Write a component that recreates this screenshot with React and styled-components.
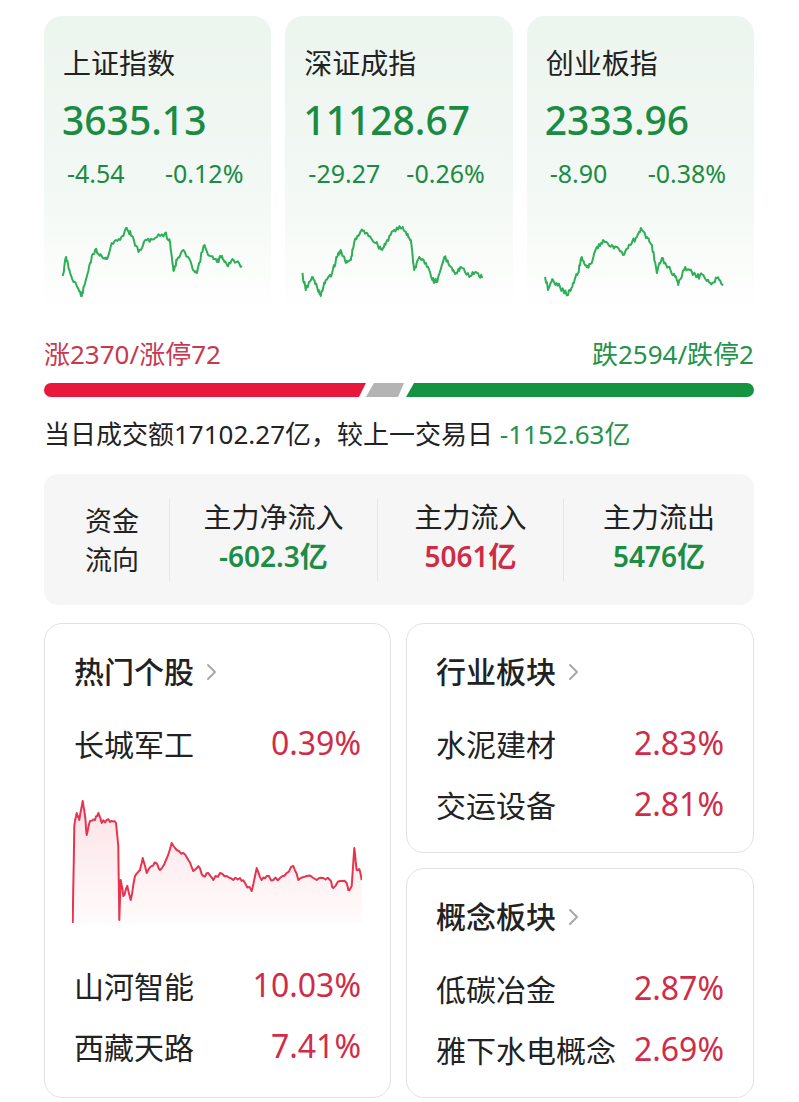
import React from "react"
import styled, { createGlobalStyle } from "styled-components"

const RED = "#d02c48"
const GREEN = "#1b8b43"
const FONT = `"Noto Sans", "Noto Sans CJK SC", sans-serif`

const GlobalStyle = createGlobalStyle`
  body {
    margin: 0;
    background: #ffffff;
    font-family: ${FONT};
    color: #222222;
  }
`

// little seeded random so the charts look the same every time
function makeRand(seed) {
  let s = seed
  return () => {
    s = (s * 9301 + 49297) % 233280
    return s / 233280
  }
}

function wiggle(points, seed, amp, steps) {
  const r = makeRand(seed)
  const out = []
  for (let i = 0; i < points.length - 1; i++) {
    const [x0, y0] = points[i]
    const [x1, y1] = points[i + 1]
    for (let k = 0; k < steps; k++) {
      const t = k / steps
      const j = k === 0 ? 0 : (r() - 0.5) * 2 * amp
      out.push([x0 + (x1 - x0) * t, y0 + (y1 - y0) * t + j])
    }
  }
  out.push(points[points.length - 1])
  return out
}

const toPath = (pts) =>
  pts.map((p, i) => `${i ? "L" : "M"}${p[0].toFixed(1)} ${p[1].toFixed(1)}`).join(" ")

const indices = [
  {
    name: "上证指数",
    value: "3635.13",
    change: "-4.54",
    pct: "-0.12%",
    left: 44,
    line: [
      [62.7, 276], [66, 257], [70, 273], [76.7, 286], [81.7, 296], [85, 283], [90, 263],
      [95, 250], [101.7, 256], [106.7, 259], [111.7, 243], [120, 240], [126.7, 228],
      [131.7, 236], [138.3, 252], [146.7, 240], [155, 238], [165, 233], [170, 243],
      [173.3, 271], [176.7, 260], [183.3, 250], [191.7, 266], [196.7, 273], [203.3, 246],
      [210, 256], [216.7, 262], [221.7, 256], [226.7, 265], [233.3, 260], [241.7, 266],
    ],
  },
  {
    name: "深证成指",
    value: "11128.67",
    change: "-29.27",
    pct: "-0.26%",
    left: 286,
    line: [
      [303, 273], [306.7, 290], [313, 277], [318, 287], [321.7, 296], [326.7, 280], [333, 273],
      [338, 257], [341.7, 250], [346.7, 263], [351.7, 260], [355, 243], [361.7, 231],
      [368, 233], [376.7, 243], [383, 250], [388, 240], [395, 230], [403, 228], [406.7, 232],
      [411.7, 240], [415, 270], [420, 257], [426.7, 263], [433, 280], [438, 282], [445, 257],
      [451.7, 267], [456.7, 273], [461.7, 267], [470, 277], [476.7, 272], [483, 278],
    ],
  },
  {
    name: "创业板指",
    value: "2333.96",
    change: "-8.90",
    pct: "-0.38%",
    left: 527,
    line: [
      [545, 277], [548, 290], [553, 280], [560, 287], [568, 295], [573, 283], [578, 273],
      [581.7, 257], [586.7, 267], [591.7, 263], [596.7, 247], [603, 240], [611.7, 245],
      [618, 248], [623, 255], [630, 245], [636.7, 237], [640.7, 228], [646.7, 237],
      [651.7, 245], [656.7, 273], [661.7, 258], [668, 267], [675, 277], [678, 285],
      [685, 267], [691.7, 272], [696.7, 277], [703, 275], [710, 283], [716.7, 278], [723, 285],
    ],
  },
]

const hotLine = [
  [72.7, 925], [74.3, 828], [76.7, 815], [79.3, 822], [82.7, 803], [85, 818], [86.7, 837],
  [90, 823], [95, 822], [98.3, 815], [101.7, 825], [106.7, 822], [111.7, 823], [116, 825],
  [118.3, 848], [119.3, 922], [120.7, 882], [123.3, 898], [127.3, 888], [130.7, 902],
  [135, 878], [140, 872], [142.7, 860], [146.7, 875], [151.7, 868], [156, 865], [160, 872],
  [166, 862], [171.7, 845], [176.7, 852], [183.3, 855], [188.3, 862], [193.3, 873],
  [198.3, 868], [203.3, 878], [208.3, 875], [213.3, 882], [220, 875], [226.7, 878],
  [233.3, 882], [240, 880], [245, 885], [251.7, 893], [256.7, 870], [261.7, 882],
  [266.7, 878], [273.3, 882], [280, 880], [286.7, 875], [293.3, 868], [298.3, 882],
  [306.7, 878], [316.7, 882], [323.3, 880], [330, 882], [333.3, 890], [340, 883],
  [346.7, 885], [348.3, 892], [351.7, 888], [354.3, 850], [356.7, 872], [359.3, 871],
  [361.7, 882],
]

const flows = [
  { label: "主力净流入", value: "-602.3亿", up: false },
  { label: "主力流入", value: "5061亿", up: true },
  { label: "主力流出", value: "5476亿", up: false },
]

const Page = styled.div`
  width: 710px;
  padding: 16px 45px 4px 44px;
`

const IndexGrid = styled.div`
  display: grid;
  grid-template-columns: repeat(3, 1fr);
  gap: 14px;
`

const IndexCard = styled.div`
  height: 302px;
  border-radius: 18px;
  background: linear-gradient(180deg, #edf5ef 0%, #f2f8f3 55%, #fbfdfb 85%, #ffffff 100%);
  padding-top: 29px;
  box-sizing: border-box;
  overflow: hidden;
`

const IndexName = styled.div`
  font-size: 28px;
  line-height: 36px;
  padding-left: 19px;
  color: #222;
`

const IndexValue = styled.div`
  margin-top: 15px;
  padding-left: 18px;
  font-size: 39px;
  line-height: 48px;
  font-weight: 500;
  color: ${GREEN};
`

const ChangeRow = styled.div`
  margin-top: 14px;
  padding-left: 23px;
  display: flex;
  font-size: 25px;
  line-height: 30px;
  color: ${GREEN};
`

const ChangeCell = styled.span`
  width: 98px;
`

const Spark = styled.svg`
  display: block;
  margin-top: 34px;
  width: 100%;
  height: 80px;
`

const StatRow = styled.div`
  margin-top: 20px;
  display: flex;
  justify-content: space-between;
  font-size: 26px;
  line-height: 32px;
`

const StatText = styled.span`
  color: ${(p) => (p.$up ? "#c8394f" : "#24934a")};
`

const Bar = styled.div`
  margin-top: 13px;
  display: flex;
  height: 14px;
`

const BarPart = styled.div`
  flex: ${(p) => p.$grow} 0 0;
  background: ${(p) => p.$color};
  border-radius: ${(p) => p.$radius};
  clip-path: ${(p) => p.$clip};
  margin-left: ${(p) => p.$shift || 0}px;
`

const Volume = styled.div`
  margin-top: 21px;
  font-size: 26px;
  line-height: 32px;
  color: #222;
`

const VolumeDiff = styled.span`
  color: #24934a;
`

const FlowBox = styled.div`
  margin-top: 24px;
  height: 131px;
  border-radius: 14px;
  background: #f5f6f5;
  display: grid;
  grid-template-columns: 125px 208px 186px 1fr;
  align-items: center;
`

const FlowTitle = styled.div`
  font-size: 27px;
  line-height: 39px;
  padding-left: 41px;
  color: #222;
`

const Metric = styled.div`
  border-left: 1px solid #e4e5e4;
  display: flex;
  flex-direction: column;
  align-items: center;
  padding: 0 0 4px;
`

const MetricLabel = styled.div`
  font-size: 28px;
  line-height: 36px;
  color: #222;
`

const MetricValue = styled.div`
  font-size: 28px;
  line-height: 42px;
  font-weight: 600;
  color: ${(p) => (p.$up ? "#cf2b46" : "#1d8c44")};
`

const BottomGrid = styled.div`
  margin-top: 18px;
  display: grid;
  grid-template-columns: 347px 1fr;
  gap: 15px;
`

const Column = styled.div`
  display: flex;
  flex-direction: column;
  gap: 15px;
`

const Panel = styled.div`
  flex: 1;
  border: 1px solid #e2e2e2;
  border-radius: 18px;
  background: #ffffff;
  padding: 29px 29px ${(p) => (p.$tall ? 21 : 15)}px 29px;
`

const PanelHead = styled.div`
  display: flex;
  align-items: center;
  gap: 12px;
  font-size: 30px;
  line-height: 38px;
  font-weight: 500;
  color: #222;
  margin-bottom: 21px;
`

const Row = styled.div`
  display: flex;
  justify-content: space-between;
  align-items: center;
  height: 61px;
  font-size: 30px;
`

const RowName = styled.span`
  color: #222;
`

const RowPct = styled.span`
  font-size: 32px;
  color: ${RED};
`

const HotChart = styled.svg`
  display: block;
  width: 290px;
  height: 181px;
  margin-left: -2px;
`

function Chevron() {
  return (
    <svg width="11" height="18" viewBox="0 0 11 18">
      <path d="M2 2 L9 9 L2 16" fill="none" stroke="#a8a8a8" strokeWidth="2" strokeLinecap="round" strokeLinejoin="round" />
    </svg>
  )
}

function IndexTile({ item, seed }) {
  const pts = wiggle(
    item.line.map(([x, y]) => [x - item.left, y - 222]),
    seed,
    2.6,
    6
  )
  return (
    <IndexCard>
      <IndexName>{item.name}</IndexName>
      <IndexValue>{item.value}</IndexValue>
      <ChangeRow>
        <ChangeCell>{item.change}</ChangeCell>
        <span>{item.pct}</span>
      </ChangeRow>
      <Spark viewBox="0 0 227 80" preserveAspectRatio="none">
        <path d={toPath(pts)} fill="none" stroke="#2fae58" strokeWidth="2" strokeLinejoin="round" />
      </Spark>
    </IndexCard>
  )
}

function HotStockChart() {
  const pts = wiggle(
    hotLine.map(([x, y]) => [x - 72, y - 775]),
    17,
    1.8,
    3
  )
  const line = toPath(pts)
  const first = pts[0]
  const last = pts[pts.length - 1]
  const area = `${line} L${last[0].toFixed(1)} 150 L${first[0].toFixed(1)} 150 Z`
  return (
    <HotChart viewBox="0 0 290 181">
      <defs>
        <linearGradient id="hotFill" x1="0" y1="0" x2="0" y2="1">
          <stop offset="0" stopColor="#f0485f" stopOpacity="0.16" />
          <stop offset="1" stopColor="#f0485f" stopOpacity="0.02" />
        </linearGradient>
      </defs>
      <path d={area} fill="url(#hotFill)" />
      <path d={line} fill="none" stroke="#e8334f" strokeWidth="2" strokeLinejoin="round" />
    </HotChart>
  )
}

export default function App() {
  return (
    <Page>
      <GlobalStyle />
      <IndexGrid>
        {indices.map((item, i) => (
          <IndexTile key={item.name} item={item} seed={i * 37 + 11} />
        ))}
      </IndexGrid>

      <StatRow>
        <StatText $up>涨2370/涨停72</StatText>
        <StatText>跌2594/跌停2</StatText>
      </StatRow>

      <Bar>
        <BarPart $grow={321} $color="#e8173c" $radius="7px 0 0 7px" $clip="polygon(0 0, 100% 0, calc(100% - 7px) 100%, 0 100%)" />
        <BarPart $grow={38} $color="#b4b4b4" $radius="0" $clip="polygon(8px 0, 100% 0, calc(100% - 6px) 100%, 0 100%)" />
        <BarPart $grow={347} $shift={2} $color="#149440" $radius="0 7px 7px 0" $clip="polygon(8px 0, 100% 0, 100% 100%, 0 100%)" />
      </Bar>

      <Volume>
        当日成交额17102.27亿，较上一交易日 <VolumeDiff>-1152.63亿</VolumeDiff>
      </Volume>

      <FlowBox>
        <FlowTitle>
          资金
          <br />
          流向
        </FlowTitle>
        {flows.map((f) => (
          <Metric key={f.label}>
            <MetricLabel>{f.label}</MetricLabel>
            <MetricValue $up={f.up}>{f.value}</MetricValue>
          </Metric>
        ))}
      </FlowBox>

      <BottomGrid>
        <Panel $tall>
          <PanelHead>
            热门个股 <Chevron />
          </PanelHead>
          <Row>
            <RowName>长城军工</RowName>
            <RowPct>0.39%</RowPct>
          </Row>
          <HotStockChart />
          <Row>
            <RowName>山河智能</RowName>
            <RowPct>10.03%</RowPct>
          </Row>
          <Row>
            <RowName>西藏天路</RowName>
            <RowPct>7.41%</RowPct>
          </Row>
        </Panel>
        <Column>
          <Panel>
            <PanelHead>
              行业板块 <Chevron />
            </PanelHead>
            <Row>
              <RowName>水泥建材</RowName>
              <RowPct>2.83%</RowPct>
            </Row>
            <Row>
              <RowName>交运设备</RowName>
              <RowPct>2.81%</RowPct>
            </Row>
          </Panel>
          <Panel>
            <PanelHead>
              概念板块 <Chevron />
            </PanelHead>
            <Row>
              <RowName>低碳冶金</RowName>
              <RowPct>2.87%</RowPct>
            </Row>
            <Row>
              <RowName>雅下水电概念</RowName>
              <RowPct>2.69%</RowPct>
            </Row>
          </Panel>
        </Column>
      </BottomGrid>
    </Page>
  )
}
